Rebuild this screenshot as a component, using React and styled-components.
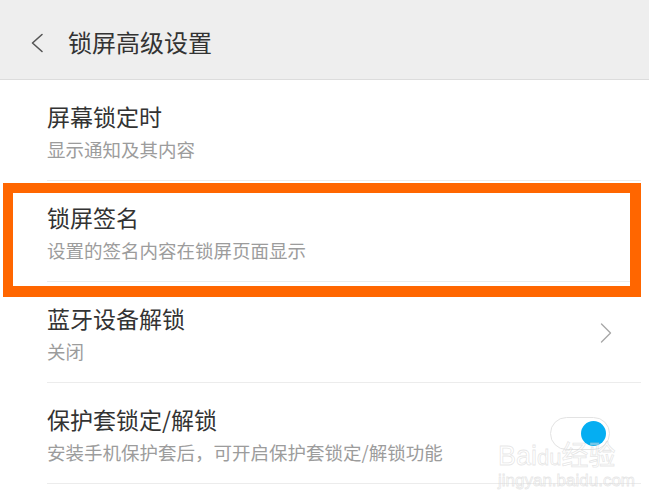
import styled, { createGlobalStyle } from "styled-components";

const GlobalStyle = createGlobalStyle`
  html, body {
    margin: 0;
    padding: 0;
    background: #ffffff;
  }
  body {
    font-family: "Noto Sans CJK SC", "Noto Sans", sans-serif;
    overflow: hidden;
  }
`;

const items = [
  { title: "屏幕锁定时", sub: "显示通知及其内容" },
  { title: "锁屏签名", sub: "设置的签名内容在锁屏页面显示", marked: true },
  { title: "蓝牙设备解锁", sub: "关闭", arrow: true },
  {
    title: "保护套锁定/解锁",
    sub: "安装手机保护套后，可开启保护套锁定/解锁功能",
    toggle: true,
  },
];

export default function App() {
  return (
    <>
      <GlobalStyle />
      <Screen>
        <Header>
          <BackIcon viewBox="0 0 14 20" aria-hidden="true">
            <path d="M12 1.5 L2.5 10 L12 18.5" />
          </BackIcon>
          <HeaderTitle>锁屏高级设置</HeaderTitle>
        </Header>
        <List>
          {items.map((item) => (
            <Row key={item.title} $marked={item.marked}>
              <Texts>
                <Title>{item.title}</Title>
                <Sub>{item.sub}</Sub>
              </Texts>
              {item.arrow && (
                <Arrow viewBox="0 0 12 20" aria-hidden="true">
                  <path d="M1.5 1 L10.5 10 L1.5 19" />
                </Arrow>
              )}
              {item.toggle && (
                <Toggle>
                  <Knob />
                </Toggle>
              )}
            </Row>
          ))}
        </List>
        <Watermark>
          <Brand>
            Bai<Paw>du</Paw>经验
          </Brand>
          <Site>jingyan.baidu.com</Site>
        </Watermark>
      </Screen>
    </>
  );
}

const Screen = styled.div`
  position: relative;
  width: 649px;
  height: 499px;
  background: #ffffff;
  overflow: hidden;
`;

const Header = styled.div`
  height: 80px;
  display: flex;
  align-items: center;
  gap: 24px;
  padding-left: 30px;
  background: #eeeeee;
  border-bottom: 1px solid #dcdcdc;
  box-sizing: border-box;
`;

const BackIcon = styled.svg`
  width: 14px;
  height: 20px;
  margin-top: 6px;
  fill: none;
  stroke: #555555;
  stroke-width: 1.6;
  stroke-linecap: round;
  stroke-linejoin: round;
`;

const HeaderTitle = styled.div`
  font-size: 24px;
  color: #333333;
  line-height: 1;
  margin-top: 4px;
`;

const List = styled.div`
  display: flex;
  flex-direction: column;
`;

const Row = styled.div`
  position: relative;
  height: 101px;
  margin-left: 47px;
  margin-right: 8px;
  display: flex;
  align-items: center;
  justify-content: space-between;
  border-bottom: 1px solid #ececec;
  box-sizing: border-box;

  ${(p) =>
    p.$marked &&
    `
    &::after {
      content: "";
      position: absolute;
      left: -44px;
      right: 0px;
      top: 2px;
      bottom: -16px;
      border: 10px solid #ff6600;
      border-right-width: 11px;
      border-bottom-width: 11px;
      pointer-events: none;
    }
  `}
`;

const Texts = styled.div`
  display: flex;
  flex-direction: column;
  gap: 8px;
  margin-top: 2px;
`;

const Title = styled.div`
  font-size: 23px;
  color: #333333;
  line-height: 28px;
`;

const Sub = styled.div`
  font-size: 18.5px;
  color: #9c9c9c;
  line-height: 22px;
`;

const Arrow = styled.svg`
  width: 12px;
  height: 20px;
  margin-right: 29px;
  margin-top: 2px;
  fill: none;
  stroke: #a8a8a8;
  stroke-width: 1.4;
  stroke-linecap: round;
  stroke-linejoin: round;
`;

const Toggle = styled.div`
  width: 60px;
  height: 33px;
  margin-right: 31px;
  border: 1px solid #e3e3e3;
  border-radius: 17px;
  box-sizing: border-box;
  background: #ffffff;
  display: flex;
  align-items: center;
  justify-content: flex-end;
  padding-right: 3px;
`;

const Knob = styled.div`
  width: 25px;
  height: 25px;
  border-radius: 50%;
  background: #05aef2;
`;

const Watermark = styled.div`
  position: absolute;
  left: 498px;
  top: 441px;
  display: flex;
  flex-direction: column;
  align-items: flex-start;
  pointer-events: none;
  font-family: "Liberation Sans", "Noto Sans CJK SC", sans-serif;
  color: rgba(255, 255, 255, 0.35);
  -webkit-text-stroke: 0.8px rgba(200, 200, 200, 0.45);
`;

const Brand = styled.div`
  font-size: 27px;
  font-weight: 400;
  line-height: 30px;
`;

const Paw = styled.span`
  font-size: 22px;
`;

const Site = styled.div`
  font-size: 17px;
  line-height: 18px;
  margin-top: -1px;
`;
